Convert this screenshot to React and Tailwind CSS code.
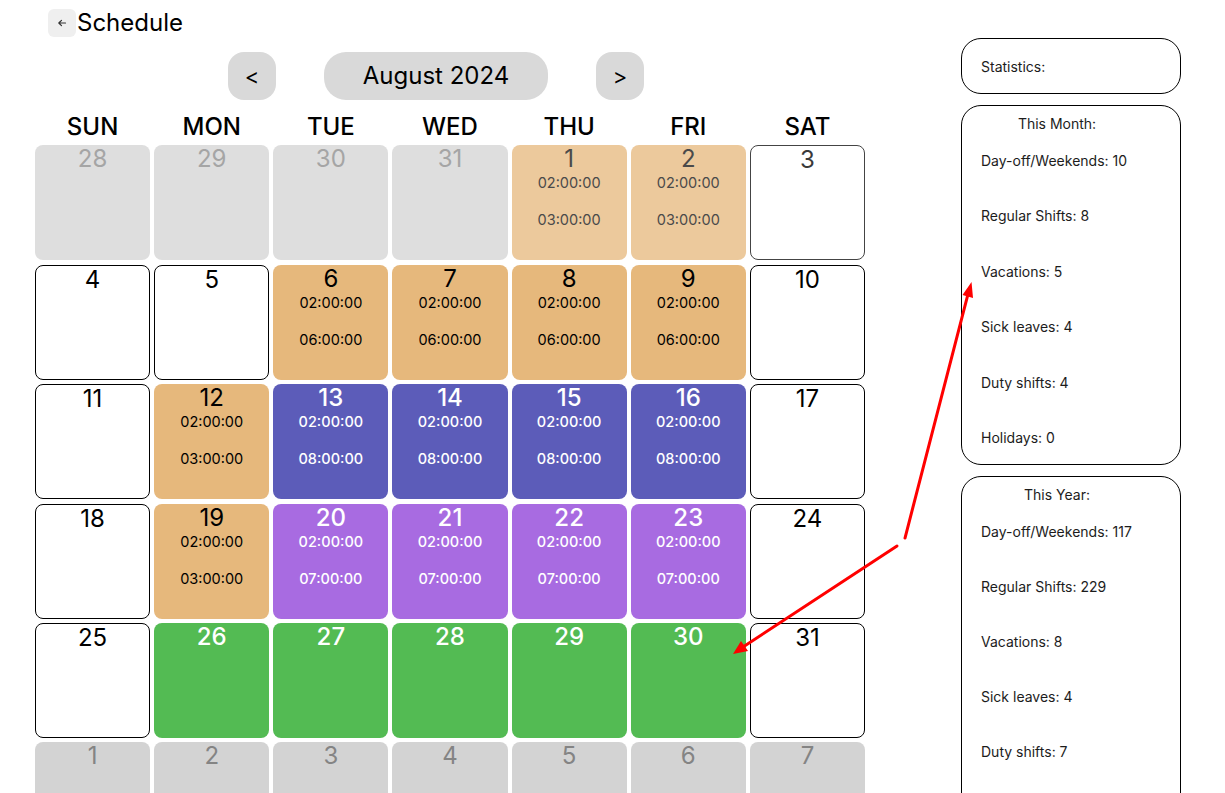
import React from 'react';

const T = (a, b) => [a, b];

// kind: prev | next | white | whiteFaded | tanFaded | tan | blue | purple | green
const weeks = [
  [
    { d: 28, k: 'prev' }, { d: 29, k: 'prev' }, { d: 30, k: 'prev' }, { d: 31, k: 'prev' },
    { d: 1, k: 'tanFaded', t: T('02:00:00', '03:00:00') },
    { d: 2, k: 'tanFaded', t: T('02:00:00', '03:00:00') },
    { d: 3, k: 'whiteFaded' },
  ],
  [
    { d: 4, k: 'white' }, { d: 5, k: 'white' },
    { d: 6, k: 'tan', t: T('02:00:00', '06:00:00') },
    { d: 7, k: 'tan', t: T('02:00:00', '06:00:00') },
    { d: 8, k: 'tan', t: T('02:00:00', '06:00:00') },
    { d: 9, k: 'tan', t: T('02:00:00', '06:00:00') },
    { d: 10, k: 'white' },
  ],
  [
    { d: 11, k: 'white' },
    { d: 12, k: 'tan', t: T('02:00:00', '03:00:00') },
    { d: 13, k: 'blue', t: T('02:00:00', '08:00:00') },
    { d: 14, k: 'blue', t: T('02:00:00', '08:00:00') },
    { d: 15, k: 'blue', t: T('02:00:00', '08:00:00') },
    { d: 16, k: 'blue', t: T('02:00:00', '08:00:00') },
    { d: 17, k: 'white' },
  ],
  [
    { d: 18, k: 'white' },
    { d: 19, k: 'tan', t: T('02:00:00', '03:00:00') },
    { d: 20, k: 'purple', t: T('02:00:00', '07:00:00') },
    { d: 21, k: 'purple', t: T('02:00:00', '07:00:00') },
    { d: 22, k: 'purple', t: T('02:00:00', '07:00:00') },
    { d: 23, k: 'purple', t: T('02:00:00', '07:00:00') },
    { d: 24, k: 'white' },
  ],
  [
    { d: 25, k: 'white' },
    { d: 26, k: 'green' }, { d: 27, k: 'green' }, { d: 28, k: 'green' },
    { d: 29, k: 'green' }, { d: 30, k: 'green' },
    { d: 31, k: 'white' },
  ],
  [1, 2, 3, 4, 5, 6, 7].map(d => ({ d, k: 'next' })),
];

const styles = {
  prev: 'bg-[#dedede] text-[#a5a5a5]',
  next: 'bg-[#d3d3d3] text-[#848484]',
  white: 'bg-white border border-black text-black',
  whiteFaded: 'bg-white border border-[#444] text-[#3a3a3a]',
  tanFaded: 'bg-[#ecc99c] text-[#4a4a4a]',
  tan: 'bg-[#e6b87c] text-black',
  blue: 'bg-[#5c5cb9] text-white font-medium',
  purple: 'bg-[#a86be1] text-white font-medium',
  green: 'bg-[#53bb53] text-white font-medium',
};

const days = ['SUN', 'MON', 'TUE', 'WED', 'THU', 'FRI', 'SAT'];

const month = ['Day-off/Weekends: 10', 'Regular Shifts: 8', 'Vacations: 5', 'Sick leaves: 4', 'Duty shifts: 4', 'Holidays: 0'];
const year = ['Day-off/Weekends: 117', 'Regular Shifts: 229', 'Vacations: 8', 'Sick leaves: 4', 'Duty shifts: 7', 'Holidays: 0'];

function DayCell({ d, k, t }) {
  return (
    <div className={`h-[115px] rounded-lg flex flex-col items-center ${styles[k]}`}>
      <span className="text-2xl leading-[28px]">{d}</span>
      {t && (
        <>
          <span className="text-[14.5px] leading-[19px]">{t[0]}</span>
          <span className="text-[14.5px] leading-[19px] mt-[18px]">{t[1]}</span>
        </>
      )}
    </div>
  );
}

export default function App() {
  return (
    <div className="relative min-h-screen bg-white text-black font-['Inter',sans-serif]">
      <header className="h-[38px] pt-[9px] pl-[48px] flex items-start">
        <div className="flex items-center">
          <button className="w-[28px] h-[28px] rounded-md bg-[#efefef] flex items-center justify-center">
            <svg width="10" height="10" viewBox="0 0 10 10" fill="none" stroke="#333" strokeWidth="1.2" strokeLinecap="round" strokeLinejoin="round">
              <path d="M8.5 5H1.8M4.5 2.3L1.8 5l2.7 2.7" />
            </svg>
          </button>
          <h1 className="ml-[1px] text-2xl leading-[28px]">Schedule</h1>
        </div>
      </header>

      <div className="flex">
        <main className="ml-[35px] w-[830px] mt-[14px]">
          <div className="flex items-center gap-12 pl-[193px]">
            <button className="w-[48px] h-[48px] rounded-2xl bg-[#d9d9d9] text-[22px]">&lt;</button>
            <div className="w-[224px] h-[48px] rounded-[22px] bg-[#d9d9d9] flex items-center justify-center text-[24px]">August 2024</div>
            <button className="w-[48px] h-[48px] rounded-2xl bg-[#d9d9d9] text-[22px]">&gt;</button>
          </div>

          <div className="mt-3 grid grid-cols-7 gap-x-1 gap-y-[4.4px]">
            {days.map(d => (
              <div key={d} className="text-center text-2xl font-medium leading-[29px]">{d}</div>
            ))}
            {weeks.flat().map((c, i) => (
              <DayCell key={i} {...c} />
            ))}
          </div>
        </main>

        <aside className="ml-[96px] w-[220px] flex flex-col gap-[11px] text-sm text-[#1c1c1c]">
          <div className="h-[56px] rounded-[20px] border border-black pl-[19px] pr-5 pt-px flex items-center">Statistics:</div>
          <div className="rounded-[20px] border border-black pl-[19px] pr-5 pt-[7.5px] pb-[16px]">
            <div className="w-[152px] text-center leading-5">This Month:</div>
            <div className="mt-[17.5px] flex flex-col gap-[35.4px]">
              {month.map(s => <div key={s} className="leading-5">{s}</div>)}
            </div>
          </div>
          <div className="rounded-[20px] border border-black pl-[19px] pr-5 pt-[8px] pb-[16px]">
            <div className="w-[152px] text-center leading-5">This Year:</div>
            <div className="mt-[17px] flex flex-col gap-[35px]">
              {year.map(s => <div key={s} className="leading-5">{s}</div>)}
            </div>
          </div>
        </aside>
      </div>

      <svg className="absolute left-0 top-0 pointer-events-none" width="1225" height="793" viewBox="0 0 1225 793">
        <g stroke="#f00" strokeWidth="3" strokeLinecap="round" fill="#f00">
          <line x1="905" y1="538" x2="968" y2="294" />
          <line x1="897" y1="546" x2="743" y2="647" />
        </g>
        <polygon points="971.5,282 973,298 962.5,295" fill="#f00" />
        <polygon points="733,654 748,651 741,641" fill="#f00" />
      </svg>
    </div>
  );
}
